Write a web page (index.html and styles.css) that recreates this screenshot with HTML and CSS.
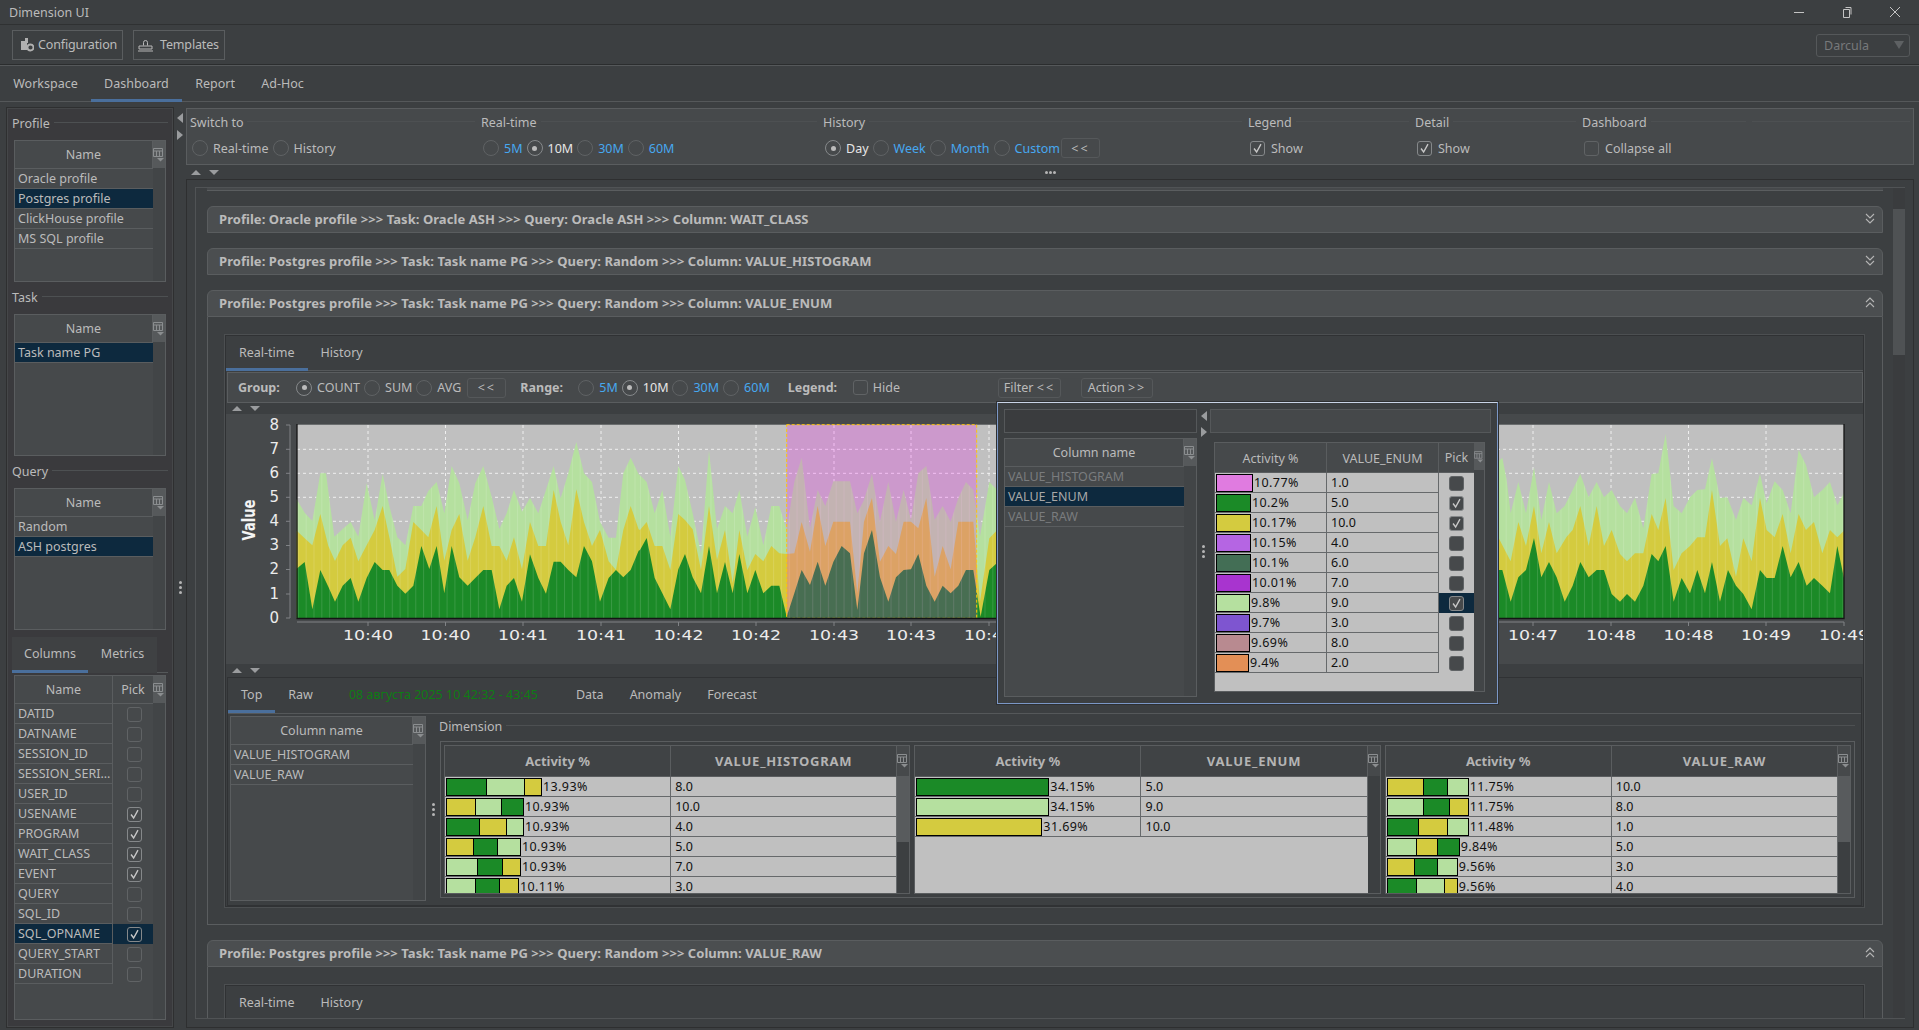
FILE: index.html
```html
<!DOCTYPE html>
<html lang="en">
<head>
  <meta charset="UTF-8" />
  <title>Dimension UI</title>
  <link rel="stylesheet" href="styles.css">
</head>
<body>
<svg class="defs" width="0" height="0">
  <symbol id="i-cols" viewBox="0 0 12 14">
    <path d="M.5 .5h9v8h-9zM.5 3h9M3.5 3v5.500M6.500 3v5.500" fill="none" stroke="#8b8e90"/>
    <path d="M4 10h7l-3.500 3.500z" fill="#8b8e90"/>
  </symbol>
  <symbol id="i-check" viewBox="0 0 15 15">
    <path d="M3.500 7.500l3 4 5-9" fill="none" stroke="#c8c8c8" stroke-width="1.600"/>
  </symbol>
  <symbol id="i-down" viewBox="0 0 10 12">
    <path d="M1 1l4 4 4-4M1 6l4 4 4-4" fill="none" stroke="#b5b5b5" stroke-width="1.100"/>
  </symbol>
  <symbol id="i-up" viewBox="0 0 10 12">
    <path d="M1 5l4-4 4 4M1 10l4-4 4 4" fill="none" stroke="#b5b5b5" stroke-width="1.100"/>
  </symbol>
</svg>

<div class="app">
  <div class="titlebar">
    <span>Dimension UI</span>
    <div class="winctl">
      <svg width="12" height="12" viewBox="0 0 12 12"><path d="M1 6.500h10" stroke="#c4c4c4"/></svg>
      <svg width="12" height="12" viewBox="0 0 12 12"><path d="M2.500 3.500h6v8h-6zM4.500 1.500h5.500v7" fill="none" stroke="#c4c4c4"/></svg>
      <svg width="12" height="12" viewBox="0 0 12 12"><path d="M1 1l10 10M11 1L1 11" stroke="#c4c4c4"/></svg>
    </div>
  </div>

  <div class="toolbar">
    <button class="tbtn tbtn-conf">
      <svg width="13" height="14" viewBox="0 0 13 14"><path d="M0 3h4v-3h3v5h-1v7H0z" fill="#b0b0b0"/><circle cx="9.500" cy="9.500" r="3" fill="none" stroke="#b0b0b0" stroke-width="1.800"/></svg>
      Configuration
    </button>
    <button class="tbtn tbtn-tpl">
      <svg width="15" height="14" viewBox="0 0 15 14"><path d="M5.500 7.500V4.500a2 2 0 1 1 4 0v3M1 8h13v3H1zM0 13h15" fill="none" stroke="#b8b8b8"/></svg>
      Templates
    </button>
    <div class="combo"><span>Darcula</span><i class="combo-arrow"></i></div>
  </div>

  <div class="tabs tabs-top">
    <a class="tab">Workspace</a><a class="tab active">Dashboard</a><a class="tab">Report</a><a class="tab">Ad-Hoc</a>
  </div>

  <div class="work">
    <aside class="side">
      <div class="legend">Profile</div>
      <div class="tb tb-list">
        <div class="tb-main">
          <table class="tbl">
            <tr><th>Name</th></tr>
            <tr><td>Oracle profile</td></tr>
            <tr class="sel"><td>Postgres profile</td></tr>
            <tr><td>ClickHouse profile</td></tr>
            <tr><td>MS SQL profile</td></tr>
          </table>
        </div>
        <div class="tb-side"><span class="tb-head"><svg width="12" height="14"><use href="#i-cols"/></svg></span></div>
      </div>

      <div class="legend">Task</div>
      <div class="tb tb-list">
        <div class="tb-main">
          <table class="tbl">
            <tr><th>Name</th></tr>
            <tr class="sel"><td>Task name PG</td></tr>
          </table>
        </div>
        <div class="tb-side"><span class="tb-head"><svg width="12" height="14"><use href="#i-cols"/></svg></span></div>
      </div>

      <div class="legend">Query</div>
      <div class="tb tb-list">
        <div class="tb-main">
          <table class="tbl">
            <tr><th>Name</th></tr>
            <tr><td>Random</td></tr>
            <tr class="sel"><td>ASH postgres</td></tr>
          </table>
        </div>
        <div class="tb-side"><span class="tb-head"><svg width="12" height="14"><use href="#i-cols"/></svg></span></div>
      </div>

      <div class="tabs tabs-side">
        <a class="tab active">Columns</a><a class="tab">Metrics</a>
      </div>
      <div class="tb tb-columns">
        <div class="tb-main">
          <table class="tbl tbl-pick">
            <tr><th>Name</th><th class="c-pick">Pick</th></tr>
            <tr><td>DATID</td><td class="c-pick"><i class="cb"></i></td></tr>
            <tr><td>DATNAME</td><td class="c-pick"><i class="cb"></i></td></tr>
            <tr><td>SESSION_ID</td><td class="c-pick"><i class="cb"></i></td></tr>
            <tr><td>SESSION_SERI...</td><td class="c-pick"><i class="cb"></i></td></tr>
            <tr><td>USER_ID</td><td class="c-pick"><i class="cb"></i></td></tr>
            <tr><td>USENAME</td><td class="c-pick"><i class="cb on"><svg><use href="#i-check"/></svg></i></td></tr>
            <tr><td>PROGRAM</td><td class="c-pick"><i class="cb on"><svg><use href="#i-check"/></svg></i></td></tr>
            <tr><td>WAIT_CLASS</td><td class="c-pick"><i class="cb on"><svg><use href="#i-check"/></svg></i></td></tr>
            <tr><td>EVENT</td><td class="c-pick"><i class="cb on"><svg><use href="#i-check"/></svg></i></td></tr>
            <tr><td>QUERY</td><td class="c-pick"><i class="cb"></i></td></tr>
            <tr><td>SQL_ID</td><td class="c-pick"><i class="cb"></i></td></tr>
            <tr class="sel"><td>SQL_OPNAME</td><td class="c-pick"><i class="cb on"><svg><use href="#i-check"/></svg></i></td></tr>
            <tr><td>QUERY_START</td><td class="c-pick"><i class="cb"></i></td></tr>
            <tr><td>DURATION</td><td class="c-pick"><i class="cb"></i></td></tr>
          </table>
        </div>
        <div class="tb-side"><span class="tb-head"><svg width="12" height="14"><use href="#i-cols"/></svg></span></div>
      </div>
    </aside>

    <div class="vsplit">
      <i class="arr-l"></i><i class="arr-r"></i>
      <div class="dots"><b></b><b></b><b></b></div>
    </div>

    <main class="main">
      <section class="switch">
        <div class="grp grp-switch">
          <div class="legend">Switch to</div>
          <div class="opts"><i class="rd"></i><span>Real-time</span><i class="rd"></i><span>History</span></div>
        </div>
        <div class="grp grp-real">
          <div class="legend">Real-time</div>
          <div class="opts"><i class="rd"></i><a>5M</a><i class="rd on"></i><span class="cur">10M</span><i class="rd"></i><a>30M</a><i class="rd"></i><a>60M</a></div>
        </div>
        <div class="grp grp-hist">
          <div class="legend">History</div>
          <div class="opts"><i class="rd on"></i><span class="cur">Day</span><i class="rd"></i><a>Week</a><i class="rd"></i><a>Month</a><i class="rd"></i><a>Custom</a><button class="mini"><span class="ll">&lt;&lt;</span></button></div>
        </div>
        <div class="grp grp-small">
          <div class="legend">Legend</div>
          <div class="opts"><i class="cb on"><svg><use href="#i-check"/></svg></i><span>Show</span></div>
        </div>
        <div class="grp grp-small">
          <div class="legend">Detail</div>
          <div class="opts"><i class="cb on"><svg><use href="#i-check"/></svg></i><span>Show</span></div>
        </div>
        <div class="grp grp-dash">
          <div class="legend">Dashboard</div>
          <div class="opts"><i class="cb"></i><span>Collapse all</span></div>
        </div>
        <div class="grp grp-last"><div class="legend"></div></div>
      </section>

      <div class="hsplit hsplit-main"><i class="arr-u"></i><i class="arr-d"></i><div class="hdots"><b></b><b></b><b></b></div></div>

      <section class="board">
        <div class="board-in">
          <div class="cards">
            <div class="stub"></div>

            <div class="card">
              <div class="card-head"><span>Profile: Oracle profile &gt;&gt;&gt; Task: Oracle ASH &gt;&gt;&gt; Query: Oracle ASH &gt;&gt;&gt; Column: WAIT_CLASS</span><svg width="10" height="12"><use href="#i-down"/></svg></div>
            </div>
            <div class="card">
              <div class="card-head"><span>Profile: Postgres profile &gt;&gt;&gt; Task: Task name PG &gt;&gt;&gt; Query: Random &gt;&gt;&gt; Column: VALUE_HISTOGRAM</span><svg width="10" height="12"><use href="#i-down"/></svg></div>
            </div>

            <div class="card">
              <div class="card-head"><span>Profile: Postgres profile &gt;&gt;&gt; Task: Task name PG &gt;&gt;&gt; Query: Random &gt;&gt;&gt; Column: VALUE_ENUM</span><svg width="10" height="12"><use href="#i-up"/></svg></div>
              <div class="card-body">
                <div class="inner">
                  <div class="tabs tabs-inner"><a class="tab active">Real-time</a><a class="tab">History</a></div>
                  <div class="ctl">
                    <b class="ctl-l">Group:</b>
                    <i class="rd on"></i><span>COUNT</span><i class="rd"></i><span>SUM</span><i class="rd"></i><span>AVG</span><button class="mini mini-group"><span class="ll">&lt;&lt;</span></button>
                    <b class="ctl-l ctl-range">Range:</b>
                    <i class="rd"></i><a>5M</a><i class="rd on"></i><span class="cur">10M</span><i class="rd"></i><a>30M</a><i class="rd"></i><a>60M</a>
                    <b class="ctl-l ctl-legend">Legend:</b>
                    <i class="cb"></i><span>Hide</span>
                    <button class="mini mini-filter">Filter <span class="ll">&lt;&lt;</span></button>
                    <button class="mini mini-action">Action <span class="ll">&gt;&gt;</span></button>
                  </div>
                  <div class="hsplit"><i class="arr-u"></i><i class="arr-d"></i></div>

                  <div class="chart">
                    <svg width="1637" height="250" viewBox="226 414 1637 250">
                      <defs>
                        <pattern id="stripes" width="23.490" height="10" patternUnits="userSpaceOnUse">
                          <rect width="3" height="10" fill="#fff" fill-opacity=".13"/>
                        </pattern>
                        <polygon id="l1" points="20,595 20,238 44,278 67,303 91,160 108,160 133,350 158,327 182,306 205,350 230,190 254,300 278,162 298,258 322,352 346,376 370,258 394,258 415,213 440,186 463,280 485,138 508,190 533,300 556,190 580,138 605,230 628,327 650,280 672,210 696,275 720,234 745,280 768,210 791,138 812,235 835,160 859,66 882,160 906,186 930,305 956,353 978,353 1000,160 1022,113 1046,163 1050,166 1050,595"/>
                        <polygon id="l2" points="0,595 0,166 20,186 44,280 67,210 91,350 115,138 135,180 158,280 183,400 207,92 231,327 255,258 278,280 298,210 322,350 346,262 370,376 394,258 418,258 440,330 463,186 485,113 510,325 533,210 556,258 580,184 630,184 652,280 672,240 696,162 720,305 745,186 768,305 791,210 813,300 835,160 859,138 884,300 908,258 932,305 955,235 978,186 1000,210 1020,350 1048,186 1072,210 1072,595"/>
                        <polygon id="l3" points="24,595 24,125 37,113 50,180 62,280 85,186 108,280 132,142 154,300 177,186 200,280 224,258 248,210 271,162 296,232 320,186 342,232 365,210 390,258 411,280 435,234 460,325 485,162 505,160 527,42 551,258 575,280 600,232 622,210 645,208 666,115 690,234 712,232 738,300 760,234 785,256 810,162 830,250 854,184 878,210 902,280 926,90 948,135 972,232 997,210 1020,186 1042,256 1062,220 1062,595"/>
                      </defs>
                      <rect x="297" y="424.700" width="1547" height="193.600" fill="#c0c0c0"/>
                      <g class="grid">
                        <path d="M297 449.300H1844M297 473.300H1844M297 497.300H1844M297 521.300H1844M297 545.500H1844M297 569.500H1844M297 594H1844"/>
                        <path d="M368 425V618M445.500 425V618M523 425V618M601 425V618M678.500 425V618M756 425V618M834 425V618M911 425V618M989 425V618M1533 425V618M1611 425V618M1688.500 425V618M1766 425V618"/>
                      </g>

                      <g transform="translate(290 420) scale(.3333)">
                        <use href="#l1" fill="#b5e09f"/>
                        <polygon fill="#d4cb3f" points="20,595 20,332 44,355 67,376 91,282 115,378 135,423 158,376 182,353 205,424 230,376 254,330 278,258 298,352 322,470 346,447 370,306 394,330 415,352 440,258 463,422 485,330 508,282 533,422 556,352 580,258 605,378 628,378 650,422 672,352 696,448 720,306 745,378 768,378 791,210 812,305 835,376 859,208 882,306 906,378 930,330 956,424 978,450 1000,330 1022,258 1046,328 1050,330 1050,595"/>
                        <polygon fill="#1b8a27" points="20,595 20,446 44,426 67,568 91,450 115,500 135,545 158,497 182,474 205,545 230,474 254,426 278,450 298,450 322,497 346,521 370,497 394,378 418,447 440,378 463,520 485,378 508,472 533,497 556,474 580,450 605,450 628,568 650,497 672,474 696,545 720,403 745,474 768,521 791,425 812,425 835,450 859,472 882,378 906,424 930,545 956,474 978,450 1000,472 1022,450 1046,392 1050,390 1050,595"/>
                        <use href="#l1" fill="url(#stripes)"/>
                      </g>
                      <g transform="translate(640 420) scale(.3333)">
                        <use href="#l2" fill="#b5e09f"/>
                        <polygon fill="#d4cb3f" points="0,595 0,330 20,306 44,378 67,378 91,450 115,282 135,300 158,328 183,450 207,258 231,420 255,330 278,490 298,330 322,450 346,402 370,424 394,378 418,400 440,402 463,400 485,306 510,395 533,258 556,378 580,305 630,305 652,520 672,305 696,234 720,425 745,378 768,402 791,305 813,305 835,325 859,234 884,470 908,378 932,448 955,305 1000,305 1020,545 1048,355 1072,330 1072,595"/>
                        <polygon fill="#1b8a27" points="0,595 0,390 20,354 44,474 67,520 91,568 115,448 135,402 158,472 183,520 207,378 231,520 255,426 278,520 298,402 322,520 346,450 370,520 394,497 418,497 440,590 463,520 485,450 510,495 533,425 556,497 580,426 605,378 630,400 652,570 672,400 696,330 720,472 745,545 768,472 791,450 813,448 835,402 859,497 884,545 908,497 932,520 955,497 978,450 1000,450 1022,590 1048,450 1072,428 1072,595"/>
                        <use href="#l2" fill="url(#stripes)"/>
                      </g>
                      <g transform="translate(1490 420) scale(.3333)">
                        <use href="#l3" fill="#b5e09f"/>
                        <polygon fill="#d4cb3f" points="24,595 24,350 62,424 85,306 108,378 132,258 154,400 177,306 200,400 230,350 248,330 271,258 296,378 320,258 342,378 365,330 390,402 411,424 435,400 460,400 485,282 505,330 527,234 551,450 575,400 600,378 622,352 645,352 666,210 690,378 712,355 738,470 760,355 785,424 810,234 830,330 854,352 878,282 902,400 926,282 948,330 972,306 997,400 1020,330 1042,352 1062,332 1062,595"/>
                        <polygon fill="#1b8a27" points="24,595 24,450 37,450 62,545 85,472 108,450 132,354 154,472 177,426 200,472 224,545 248,497 271,426 296,472 320,450 342,450 365,522 390,545 411,522 435,545 460,497 485,402 505,424 527,378 551,545 575,474 600,520 622,450 645,520 666,426 690,545 714,450 738,497 760,522 785,568 810,450 830,474 854,474 878,378 902,472 926,426 950,497 972,474 997,497 1020,520 1042,378 1062,474 1062,595"/>
                        <use href="#l3" fill="url(#stripes)"/>
                      </g>

                      <rect class="pick-area" x="786.700" y="424.700" width="190" height="193.600"/>
                      <path d="M297 424V618.500H1844V424" fill="none" stroke="#151515" stroke-width="1.300"/>
                      <path class="axis" d="M290 425V618M286 425h4M286 449.300h4M286 473.300h4M286 497.300h4M286 521.300h4M286 545.500h4M286 569.500h4M286 594h4M286 618h4M297 622H1844M368 622v4M445.500 622v4M523 622v4M601 622v4M678.500 622v4M756 622v4M834 622v4M911 622v4M989 622v4M1533 622v4M1611 622v4M1688.500 622v4M1766 622v4M1844 622v4"/>

                      <g class="yl">
                        <text x="279" y="429.500">8</text><text x="279" y="454">7</text><text x="279" y="478">6</text><text x="279" y="502">5</text><text x="279" y="526">4</text><text x="279" y="550">3</text><text x="279" y="574">2</text><text x="279" y="598.500">1</text><text x="279" y="623">0</text>
                      </g>
                      <g class="xl">
                        <text x="368" y="640" textLength="50" lengthAdjust="spacingAndGlyphs">10:40</text>
                        <text x="445.500" y="640" textLength="50" lengthAdjust="spacingAndGlyphs">10:40</text>
                        <text x="523" y="640" textLength="50" lengthAdjust="spacingAndGlyphs">10:41</text>
                        <text x="601" y="640" textLength="50" lengthAdjust="spacingAndGlyphs">10:41</text>
                        <text x="678.500" y="640" textLength="50" lengthAdjust="spacingAndGlyphs">10:42</text>
                        <text x="756" y="640" textLength="50" lengthAdjust="spacingAndGlyphs">10:42</text>
                        <text x="834" y="640" textLength="50" lengthAdjust="spacingAndGlyphs">10:43</text>
                        <text x="911" y="640" textLength="50" lengthAdjust="spacingAndGlyphs">10:43</text>
                        <text x="989" y="640" textLength="50" lengthAdjust="spacingAndGlyphs">10:44</text>
                        <text x="1533" y="640" textLength="50" lengthAdjust="spacingAndGlyphs">10:47</text>
                        <text x="1611" y="640" textLength="50" lengthAdjust="spacingAndGlyphs">10:48</text>
                        <text x="1688.500" y="640" textLength="50" lengthAdjust="spacingAndGlyphs">10:48</text>
                        <text x="1766" y="640" textLength="50" lengthAdjust="spacingAndGlyphs">10:49</text>
                        <text x="1844" y="640" textLength="50" lengthAdjust="spacingAndGlyphs">10:49</text>
                      </g>
                      <text class="ytitle" transform="translate(255 520) rotate(-90)" textLength="41" lengthAdjust="spacingAndGlyphs">Value</text>
                    </svg>
                  </div>

                  <div class="hsplit"><i class="arr-u"></i><i class="arr-d"></i></div>

                  <div class="lower">
                    <div class="tabs tabs-lower">
                      <a class="tab active">Top</a><a class="tab">Raw</a>
                      <span class="range-date">08 августа 2025 10 42:32 - 43:45</span>
                      <a class="tab">Data</a><a class="tab">Anomaly</a><a class="tab">Forecast</a>
                    </div>
                    <div class="lower-body">
                      <div class="tb tb-colname">
                        <div class="tb-main">
                          <table class="tbl">
                            <tr><th>Column name</th></tr>
                            <tr><td>VALUE_HISTOGRAM</td></tr>
                            <tr><td>VALUE_RAW</td></tr>
                          </table>
                        </div>
                        <div class="tb-side"><span class="tb-head"><svg width="12" height="14"><use href="#i-cols"/></svg></span></div>
                      </div>
                      <div class="dots dots-v"><b></b><b></b><b></b></div>
                      <div class="dim">
                        <div class="legend">Dimension</div>
                        <div class="dim-box">

                          <div class="tb tb-top">
                            <div class="tb-main">
                              <table class="tbl tbl-data">
                                <tr><th>Activity %</th><th class="th-val">VALUE_HISTOGRAM</th></tr>
                                <tr><td><div class="barcell"><div class="bar"><i class="g" style="width:39px"></i><i class="l" style="width:38px"></i><i class="y" style="width:17px"></i></div>13.93%</div></td><td>8.0</td></tr>
                                <tr><td><div class="barcell"><div class="bar"><i class="y" style="width:28px"></i><i class="l" style="width:26px"></i><i class="g" style="width:22px"></i></div>10.93%</div></td><td>10.0</td></tr>
                                <tr><td><div class="barcell"><div class="bar"><i class="g" style="width:32px"></i><i class="y" style="width:27px"></i><i class="l" style="width:17px"></i></div>10.93%</div></td><td>4.0</td></tr>
                                <tr><td><div class="barcell"><div class="bar"><i class="y" style="width:26px"></i><i class="g" style="width:24px"></i><i class="l" style="width:23px"></i></div>10.93%</div></td><td>5.0</td></tr>
                                <tr><td><div class="barcell"><div class="bar"><i class="l" style="width:30px"></i><i class="g" style="width:25px"></i><i class="y" style="width:18px"></i></div>10.93%</div></td><td>7.0</td></tr>
                                <tr><td><div class="barcell"><div class="bar"><i class="l" style="width:28px"></i><i class="g" style="width:24px"></i><i class="y" style="width:19px"></i></div>10.11%</div></td><td>3.0</td></tr>
                              </table>
                            </div>
                            <div class="tb-side"><span class="tb-head"><svg width="12" height="14"><use href="#i-cols"/></svg></span><span class="thumb"></span></div>
                          </div>

                          <div class="tb tb-top">
                            <div class="tb-main">
                              <table class="tbl tbl-data">
                                <tr><th>Activity %</th><th class="th-val">VALUE_ENUM</th></tr>
                                <tr><td><div class="barcell"><div class="bar"><i class="g" style="width:131px"></i></div>34.15%</div></td><td>5.0</td></tr>
                                <tr><td><div class="barcell"><div class="bar"><i class="l" style="width:131px"></i></div>34.15%</div></td><td>9.0</td></tr>
                                <tr><td><div class="barcell"><div class="bar"><i class="y" style="width:124px"></i></div>31.69%</div></td><td>10.0</td></tr>
                              </table>
                            </div>
                            <div class="tb-side"><span class="tb-head"><svg width="12" height="14"><use href="#i-cols"/></svg></span></div>
                          </div>

                          <div class="tb tb-top">
                            <div class="tb-main">
                              <table class="tbl tbl-data">
                                <tr><th>Activity %</th><th class="th-val">VALUE_RAW</th></tr>
                                <tr><td><div class="barcell"><div class="bar"><i class="y" style="width:35px"></i><i class="g" style="width:24px"></i><i class="l" style="width:21px"></i></div>11.75%</div></td><td>10.0</td></tr>
                                <tr><td><div class="barcell"><div class="bar"><i class="l" style="width:35px"></i><i class="g" style="width:26px"></i><i class="y" style="width:19px"></i></div>11.75%</div></td><td>8.0</td></tr>
                                <tr><td><div class="barcell"><div class="bar"><i class="g" style="width:30px"></i><i class="y" style="width:29px"></i><i class="l" style="width:21px"></i></div>11.48%</div></td><td>1.0</td></tr>
                                <tr><td><div class="barcell"><div class="bar"><i class="l" style="width:28px"></i><i class="y" style="width:21px"></i><i class="g" style="width:22px"></i></div>9.84%</div></td><td>5.0</td></tr>
                                <tr><td><div class="barcell"><div class="bar"><i class="y" style="width:26px"></i><i class="g" style="width:23px"></i><i class="l" style="width:20px"></i></div>9.56%</div></td><td>3.0</td></tr>
                                <tr><td><div class="barcell"><div class="bar"><i class="g" style="width:28px"></i><i class="l" style="width:28px"></i><i class="y" style="width:13px"></i></div>9.56%</div></td><td>4.0</td></tr>
                              </table>
                            </div>
                            <div class="tb-side"><span class="tb-head"><svg width="12" height="14"><use href="#i-cols"/></svg></span><span class="thumb"></span></div>
                          </div>

                        </div>
                      </div>
                    </div>
                  </div>
                </div>
              </div>
            </div>

            <div class="card">
              <div class="card-head"><span>Profile: Postgres profile &gt;&gt;&gt; Task: Task name PG &gt;&gt;&gt; Query: Random &gt;&gt;&gt; Column: VALUE_RAW</span><svg width="10" height="12"><use href="#i-up"/></svg></div>
              <div class="card-body">
                <div class="inner">
                  <div class="tabs tabs-inner tabs-plain"><a class="tab">Real-time</a><a class="tab">History</a></div>
                </div>
              </div>
            </div>
          </div>
          <div class="vbar"><span class="vthumb"></span></div>
        </div>
      </section>
    </main>
  </div>

  <!-- filter popup, floats over the chart -->
  <div class="popup">
    <div class="pop-left">
      <div class="field"></div>
      <div class="tb tb-popcols">
        <div class="tb-main">
          <table class="tbl tbl-dim">
            <tr><th>Column name</th></tr>
            <tr><td>VALUE_HISTOGRAM</td></tr>
            <tr class="sel"><td>VALUE_ENUM</td></tr>
            <tr><td>VALUE_RAW</td></tr>
          </table>
        </div>
        <div class="tb-side"><span class="tb-head"><svg width="12" height="14"><use href="#i-cols"/></svg></span></div>
      </div>
    </div>
    <div class="pop-sep">
      <i class="arr-l"></i><i class="arr-r"></i>
      <div class="dots"><b></b><b></b><b></b></div>
    </div>
    <div class="pop-right">
      <div class="field field-light"></div>
      <div class="tb tb-popvals">
        <div class="tb-main tb-main-grey">
          <table class="tbl tbl-data tbl-vals">
            <tr><th>Activity %</th><th>VALUE_ENUM</th><th class="c-pick">Pick</th></tr>
            <tr><td><div class="barcell"><div class="bar"><i style="width:35px;background:#e07be0"></i></div>10.77%</div></td><td>1.0</td><td class="c-pick"><i class="cb"></i></td></tr>
            <tr><td><div class="barcell"><div class="bar"><i style="width:33px;background:#1b8a27"></i></div>10.2%</div></td><td>5.0</td><td class="c-pick"><i class="cb on"><svg><use href="#i-check"/></svg></i></td></tr>
            <tr><td><div class="barcell"><div class="bar"><i style="width:33px;background:#d4cb3f"></i></div>10.17%</div></td><td>10.0</td><td class="c-pick"><i class="cb on"><svg><use href="#i-check"/></svg></i></td></tr>
            <tr><td><div class="barcell"><div class="bar"><i style="width:33px;background:#b565e3"></i></div>10.15%</div></td><td>4.0</td><td class="c-pick"><i class="cb"></i></td></tr>
            <tr><td><div class="barcell"><div class="bar"><i style="width:33px;background:#436e55"></i></div>10.1%</div></td><td>6.0</td><td class="c-pick"><i class="cb"></i></td></tr>
            <tr><td><div class="barcell"><div class="bar"><i style="width:33px;background:#a834cf"></i></div>10.01%</div></td><td>7.0</td><td class="c-pick"><i class="cb"></i></td></tr>
            <tr><td><div class="barcell"><div class="bar"><i style="width:32px;background:#b5e09f"></i></div>9.8%</div></td><td>9.0</td><td class="c-pick sel-cell"><i class="cb on"><svg><use href="#i-check"/></svg></i></td></tr>
            <tr><td><div class="barcell"><div class="bar"><i style="width:32px;background:#7e55d0"></i></div>9.7%</div></td><td>3.0</td><td class="c-pick"><i class="cb"></i></td></tr>
            <tr><td><div class="barcell"><div class="bar"><i style="width:32px;background:#b88a90"></i></div>9.69%</div></td><td>8.0</td><td class="c-pick"><i class="cb"></i></td></tr>
            <tr><td><div class="barcell"><div class="bar"><i style="width:31px;background:#e38f56"></i></div>9.4%</div></td><td>2.0</td><td class="c-pick"><i class="cb"></i></td></tr>
          </table>
        </div>
        <div class="tb-side"><span class="tb-head"><svg width="12" height="14"><use href="#i-cols"/></svg></span></div>
      </div>
    </div>
  </div>
</div>
</body>
</html>
```

FILE: styles.css
```css
* {
  box-sizing: border-box;
}
html, body {
  margin: 0;
  height: 1030px;
  overflow: hidden;
}
body {
  background: #3c3f41;
  color: #bbbbbb;
  font-family: "Noto Sans", "DejaVu Sans", sans-serif;
  font-size: 12.5px;
}
.defs {
  position: absolute;
}
button {
  font: inherit;
  color: inherit;
}
a {
  color: #46a8f0;
}
.ll {
  letter-spacing: 2px;
}
.app {
  position: relative;
  width: 1919px;
  height: 1030px;
  display: flex;
  flex-direction: column;
}

/* top bars */
.titlebar {
  height: 25px;
  flex: none;
  padding: 0 0 0 9px;
  display: flex;
  align-items: center;
  justify-content: space-between;
  border-bottom: 1px solid #2f3132;
}
.winctl {
  display: flex;
  gap: 36px;
  padding-right: 18px;
}
.toolbar {
  height: 40px;
  flex: none;
  display: flex;
  align-items: center;
  padding: 0 9px 0 12px;
  border-bottom: 1px solid #2b2d2e;
  box-shadow: 0 1px 0 #55585a;
}
.tbtn {
  height: 30px;
  display: flex;
  align-items: center;
  gap: 4px;
  background: #3c3f41;
  border: 1px solid #5a5d5f;
  padding: 0 0 0 8px;
  letter-spacing: -.15px;
}
.tbtn-conf {
  width: 111px;
  margin-right: 10px;
}
.tbtn-tpl {
  width: 92px;
  padding-left: 4px;
  gap: 7px;
}
.combo {
  margin: 1px 0 0 auto;
  width: 94px;
  height: 23px;
  border: 1px solid #55585a;
  border-radius: 3px;
  display: flex;
  align-items: center;
  justify-content: space-between;
  padding: 0 5px 0 7px;
  color: #77797b;
}
.combo-arrow {
  border-left: 5px solid transparent;
  border-right: 5px solid transparent;
  border-top: 8px solid #5e6163;
}

/* tabs */
.tabs {
  display: flex;
  flex: none;
}
.tab {
  display: flex;
  align-items: center;
  padding: 0 13px;
  color: #bbbbbb;
  border-bottom: 3px solid transparent;
}
.tab.active {
  border-bottom-color: #4a6f9c;
}
.tabs-top {
  height: 36px;
  border-bottom: 1px solid #55585a;
  margin-top: 1px;
}
.tabs-top .tab {
  height: 36px;
  padding: 2px 13.2px 0;
}
.tabs-side {
  height: 36px;
  margin: 7px 5px 2px;
  border-bottom: 1px solid #55585a;
}
.tabs-side .tab {
  height: 36px;
  background: #3f4143;
  width: 76px;
  justify-content: center;
  padding: 0;
}
.tabs-side .tab + .tab {
  width: 69px;
}
.tabs-inner {
  height: 35px;
  border-bottom: 1px solid #55585a;
}
.tabs-inner .tab {
  height: 35px;
  padding: 0 13px;
}
.tabs-lower {
  height: 36px;
  border-bottom: 1px solid #55585a;
}
.tabs-lower .tab {
  height: 35px;
}
.range-date {
  width: 214px;
  margin-left: 23px;
  display: flex;
  align-items: center;
  color: #0e7d14;
  white-space: nowrap;
  padding-bottom: 2px;
}

/* work area */
.work {
  flex: 1;
  min-height: 0;
  display: flex;
  padding: 5px 5px 2px 6px;
}
.side {
  width: 168px;
  flex: none;
  background: #3a3a3d;
  border: 1px solid #2e2f30;
  box-shadow: inset 0 0 0 1px #454749;
  padding-top: 8px;
}
.legend {
  height: 16px;
  display: flex;
  align-items: center;
  gap: 4px;
  white-space: nowrap;
}
.legend::after {
  content: "";
  flex: 1;
  border-top: 1px solid #4d5052;
  margin-top: -2px;
}
.side > .legend {
  margin: -1px 5px 9px;
}
.side .tb + .legend {
  margin-top: 7px;
}

/* tables */
.tb {
  display: flex;
  background: #46494b;
  border: 1px solid #5a5d5f;
  overflow: hidden;
}
.tb-main {
  flex: 1;
  min-width: 0;
  overflow: hidden;
}
.tb-side {
  width: 12px;
  flex: none;
  background: #424547;
  display: flex;
  flex-direction: column;
}
.tb-head {
  height: 27px;
  flex: none;
  background: #56595b;
  display: flex;
  align-items: center;
  justify-content: center;
}
.tb-head svg {
  display: block;
}
.thumb {
  height: 66px;
  background: #585b5d;
}
.tbl {
  width: 100%;
  border-collapse: separate;
  border-spacing: 0;
  table-layout: fixed;
}
.tbl th {
  height: 28px;
  padding: 0;
  font-weight: 400;
  background: #46494b;
  border-bottom: 1px solid #5a5d5f;
  border-right: 1px solid #5a5d5f;
}
.tbl td {
  height: 20px;
  padding: 0 0 0 3px;
  border-bottom: 1px solid #5a5d5f;
  white-space: nowrap;
  overflow: hidden;
}
.tbl .sel td {
  background: #0d293e;
}
.tbl .c-pick {
  text-align: center;
  border-bottom: 0;
  padding: 0;
}
.tbl td.c-pick {
  line-height: 0;
}
.tbl-pick td.c-pick {
  padding-left: 3px;
}
.tbl th.c-pick {
  border-right: 0;
  border-bottom: 1px solid #5a5d5f;
}
.tb-list {
  margin: 0 7px;
  height: 142px;
}
.tb-columns {
  margin: 0 7px;
  height: 345px;
}
.tbl-pick th:first-child,
.tbl-pick td:first-child {
  width: 98px;
  border-right: 1px solid #5a5d5f;
}
.tbl-pick th.c-pick {
  width: 40px;
}

/* small controls */
.cb {
  display: inline-block;
  width: 15px;
  height: 15px;
  border: 1px solid #606365;
  border-radius: 3px;
  vertical-align: top;
  flex: none;
}
.cb.on {
  border-color: #85888a;
}
.cb svg {
  display: block;
  width: 13px;
  height: 13px;
}
.rd {
  width: 16px;
  height: 16px;
  flex: none;
  border: 1px solid #5f6264;
  border-radius: 50%;
  display: flex;
  align-items: center;
  justify-content: center;
}
.rd.on {
  border-color: #85888a;
}
.rd.on::after {
  content: "";
  width: 5px;
  height: 5px;
  border-radius: 50%;
  background: #bbbbbb;
}
.mini {
  height: 20px;
  background: #46494b;
  border: 1px solid #55585a;
  border-radius: 3px;
  padding: 0;
  width: 39px;
}
.cur {
  color: #e6e6e6;
}

/* splitters */
.vsplit {
  width: 12px;
  flex: none;
  position: relative;
  display: flex;
  flex-direction: column;
  align-items: center;
  padding-top: 6px;
  gap: 7px;
}
.arr-l, .arr-r, .arr-u, .arr-d {
  display: block;
  width: 0;
  height: 0;
  flex: none;
}
.arr-l {
  border-top: 5px solid transparent;
  border-bottom: 5px solid transparent;
  border-right: 6px solid #9a9c9e;
}
.arr-r {
  border-top: 5px solid transparent;
  border-bottom: 5px solid transparent;
  border-left: 6px solid #9a9c9e;
}
.arr-u {
  border-left: 5px solid transparent;
  border-right: 5px solid transparent;
  border-bottom: 5px solid #9a9c9e;
}
.arr-d {
  border-left: 5px solid transparent;
  border-right: 5px solid transparent;
  border-top: 5px solid #9a9c9e;
}
.dots {
  display: flex;
  flex-direction: column;
  gap: 2px;
}
.vsplit .dots {
  margin-top: 434px;
}
.dots b, .hdots b {
  width: 3px;
  height: 3px;
  background: #b5b5b5;
  border-radius: 50%;
}
.hsplit {
  height: 12px;
  flex: none;
  display: flex;
  align-items: center;
  gap: 8px;
  padding-left: 6px;
}
.ctl + .hsplit {
  height: 11px;
}
.hdots {
  display: flex;
  gap: 1px;
  margin-left: 818px;
}

/* main column */
.main {
  flex: 1;
  min-width: 0;
  display: flex;
  flex-direction: column;
}
.switch {
  height: 57px;
  flex: none;
  margin-top: 1px;
  border: 1px solid #5a5d5f;
  background: #46494b;
  display: flex;
  padding: 5px 0 0 3px;
}
.grp {
  padding-right: 6px;
  flex: none;
}
.grp-switch { width: 291px; }
.grp-real { width: 342px; }
.grp-hist { width: 425px; }
.grp-small { width: 167px; }
.grp-dash { width: 170px; }
.grp-last { flex: 1; padding-right: 3px; }
.opts {
  display: flex;
  align-items: center;
  gap: 4px;
  height: 20px;
  margin-top: 8px;
  padding-left: 2px;
}
.opts .rd + * {
  margin-left: 1px;
}
.opts .cb + span {
  margin-left: 1px;
}
.opts .cb {
  margin-right: 1px;
}
.opts .mini {
  margin-left: -3px;
}
.hsplit-main {
  height: 14px;
  padding-left: 5px;
}

/* dashboard */
.board {
  flex: 1;
  min-height: 0;
  border: 1px solid #2e2f30;
  background: #3c3f41;
  padding: 7px 8px 8px;
}
.board-in {
  height: 100%;
  display: flex;
  border: 1px solid #505355;
  border-width: 1px 0 1px 1px;
  overflow: hidden;
}
.cards {
  flex: 1;
  min-width: 0;
  padding: 0 10px 0 11px;
  overflow: hidden;
}
.stub {
  height: 3px;
  border-bottom: 1px solid #5a5d5f;
  margin-bottom: 15px;
  background: #46494b;
}
.vbar {
  width: 12px;
  flex: none;
  background: #3a3c3e;
  padding-top: 21px;
}
.vthumb {
  display: block;
  height: 146px;
  background: #4f5254;
}
.card {
  margin-bottom: 15px;
}
.card-head {
  height: 27px;
  display: flex;
  align-items: center;
  justify-content: space-between;
  padding: 0 7px 2px 11px;
  background: #4b4e50;
  border: 1px solid #5a5d5f;
  border-radius: 6px 6px 0 0;
  font-size: 13px;
  letter-spacing: .055px;
  font-weight: 700;
}
.card-head svg {
  display: block;
}
.card-body {
  border: 1px solid #5a5d5f;
  border-top: 0;
  padding: 18px 18px 17px 17px;
}
.inner {
  border: 1px solid #303234;
  box-shadow: 0 0 0 1px #4c4f51;
}

.ctl {
  height: 31px;
  margin: 1px 0 0 1px;
  border: 1px solid #5a5d5f;
  background: #46494b;
  display: flex;
  align-items: center;
  gap: 4px;
  padding-left: 10px;
}
.ctl .rd + * {
  margin-left: 1px;
}
.ctl .cb + span {
  margin-left: 1px;
}
.ctl-l {
  width: 51px;
  margin-right: 3px;
}
.mini-group {
  margin-left: 2px;
}
.ctl-range {
  margin-left: 10px;
}
.ctl-legend {
  width: 58px;
  margin-left: 14px;
}
.mini-filter {
  width: 63px;
  margin-left: 94px;
}
.mini-action {
  width: 72px;
  margin-left: 16px;
}

.chart {
  height: 250px;
  background: #46494b;
}
.chart svg {
  display: block;
}
.grid path {
  fill: none;
  stroke: #ffffff;
  stroke-opacity: .75;
  stroke-dasharray: 3 3;
}
.pick-area {
  fill: #ff00ff;
  fill-opacity: .2;
  stroke: #ffc800;
  stroke-dasharray: 3 2;
}
.axis {
  fill: none;
  stroke: #808386;
}
.yl text {
  fill: #ececec;
  font-family: "DejaVu Sans", sans-serif;
  font-size: 15px;
  text-anchor: end;
}
.xl text {
  fill: #ececec;
  font-family: "DejaVu Sans", sans-serif;
  font-size: 14px;
  text-anchor: middle;
}
.ytitle {
  fill: #f4f4f4;
  font-family: "DejaVu Sans", sans-serif;
  font-size: 18px;
  font-weight: 700;
  text-anchor: middle;
}

.lower {
  height: 229px;
  margin: 1px 1px 0;
  border: 1px solid #303234;
}
.lower-body {
  display: flex;
  padding: 2px 6px 0 2px;
}
.tb-colname {
  width: 196px;
  height: 185px;
  flex: none;
}
.dots-v {
  width: 14px;
  flex: none;
  align-items: center;
  justify-content: center;
  height: 186px;
}
.dim {
  flex: 1;
  min-width: 0;
  padding-top: 2px;
}
.dim > .legend {
  height: 16px;
  margin: 0 0 7px -1px;
}
.dim-box {
  height: 157px;
  border: 1px solid #5a5d5f;
  padding: 3px;
  display: flex;
  gap: 4px;
}
.tb-top {
  flex: 1;
  min-width: 0;
  height: 149px;
  background: #3c3f41;
}
.tb-main:has(.tbl-data) {
  background: #c0c0c0;
}
.tb-top .tb-side {
  background: #3c3f41;
}
.tb-top .tb-head {
  height: 30px;
  background: #46494b;
}
.tbl-data {
  color: #111111;
}
.tbl-data th {
  background: #3f4244;
  color: #b4b4b4;
  font-weight: 700;
  height: 31px;
}
.tb-top .tbl-data th {
  font-size: 13px;
  background: #404345;
}
.tb-top .tbl-data .th-val {
  letter-spacing: .8px;
}
.tbl-data td {
  background: #c0c0c0;
  border-right: 1px solid #66696b;
  border-bottom: 1px solid #66696b;
  padding-left: 4px;
}
.tbl-data td:first-child {
  padding-left: 0;
}
.barcell {
  display: flex;
  align-items: center;
  height: 19px;
  letter-spacing: .4px;
}
.bar {
  display: flex;
  height: 18px;
  border: 1px solid #000000;
  margin: 0 1px;
}
.bar i {
  display: block;
  height: 100%;
}
.bar i + i {
  border-left: 1px solid #000000;
}
.bar .g { background: #1b8a27; }
.bar .l { background: #b5e09f; }
.bar .y { background: #d4cb3f; }

/* popup */
.popup {
  position: absolute;
  left: 997px;
  top: 402px;
  width: 501px;
  height: 302px;
  background: #3c3f41;
  border: 1px solid #7b97c6;
  border-top-color: #c9d4e6;
  display: flex;
  padding: 6px;
  z-index: 5;
  box-shadow: 0 0 0 1px #2e3032;
}
.pop-left {
  width: 193px;
  flex: none;
}
.pop-right {
  flex: 1;
  min-width: 0;
}
.pop-sep {
  width: 13px;
  flex: none;
  display: flex;
  flex-direction: column;
  align-items: center;
  gap: 6px;
  padding-top: 2px;
}
.pop-sep .dots {
  margin-top: 102px;
}
.field {
  height: 24px;
  background: #3a3c3e;
  border: 1px solid #55585a;
  margin-bottom: 5px;
}
.field-light {
  background: #45484a;
  margin-bottom: 9px;
}
.tb-popcols {
  height: 259px;
}
.tbl-dim td {
  color: #7a7c7e;
}
.tbl-dim .sel td {
  color: #a8a8a8;
}
.tb-popvals {
  margin: 0 6px 0 4px;
  height: 250px;
}
.tb-popvals .tb-side {
  width: 10px;
}
.tb-main-grey {
  background: #c0c0c0;
}
.tbl-vals {
  width: 100%;
}
.tbl-vals th {
  font-weight: 400;
  background: #46494b;
  color: #bbbbbb;
  height: 30px;
  padding-top: 2px;
}
.tbl-vals th:nth-child(1) { width: 112px; }
.tbl-vals th:nth-child(2) { width: 112px; }
.tbl-vals th.c-pick { width: 35px; border-right: 0; }
.tbl-vals td.c-pick {
  background: #c0c0c0;
  border-right: 0;
  border-bottom: 0;
}
.tbl-vals td.sel-cell {
  background: #0d293e;
}
.tbl-vals .cb {
  background: #46494b;
}
```
